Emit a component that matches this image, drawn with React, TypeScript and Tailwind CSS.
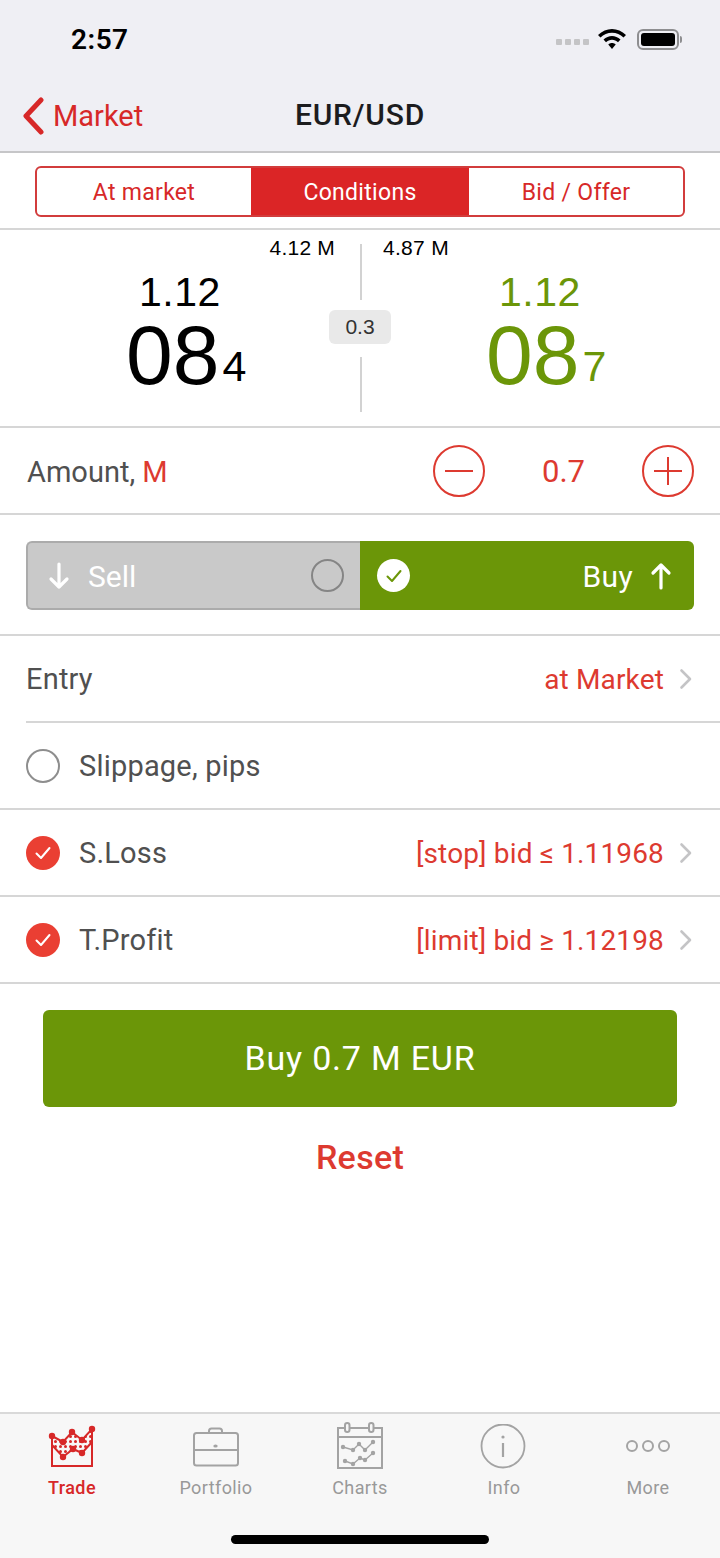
const label = "font-['Roboto',sans-serif]";
const price = "font-['Liberation_Sans',sans-serif]";

function Check({ color }: { color: string }) {
  return (
    <svg width="20" height="20" viewBox="0 0 20 20" fill="none">
      <path d="M3.5 10.5 L8 15 L16.5 5" stroke={color} strokeWidth="2" strokeLinecap="round" strokeLinejoin="round" />
    </svg>
  );
}

function TabIcon({ name }: { name: string }) {
  if (name === 'Trade') {
    return (
      <svg width="48" height="48" viewBox="0 0 48 48" fill="none" className="overflow-visible">
        <defs>
          <pattern id="dots" width="5" height="5" patternUnits="userSpaceOnUse">
            <circle cx="2.5" cy="2.5" r="1.5" fill="#d72828" />
          </pattern>
        </defs>
        <path d="M4 12 L15 18 L24 8 L34 16 L44 5 V18 L34 29 L25 25 L15 33 L4 21 Z" fill="url(#dots)" />
        <path d="M4 12 L15 18 L24 8 L34 16 L44 5 V42 H4 Z" stroke="#d72828" strokeWidth="2" />
        <path d="M4 21 L15 33 L25 25 L34 29 L44 18" stroke="#d72828" strokeWidth="2" />
        {[[4, 12], [15, 18], [24, 8], [34, 16], [44, 5], [15, 33], [25, 25], [34, 29]].map(([x, y]) => (
          <circle key={`${x}-${y}`} cx={x} cy={y} r="3.2" fill="#d72828" />
        ))}
      </svg>
    );
  }
  if (name === 'Portfolio') {
    return (
      <svg width="48" height="48" viewBox="0 0 48 48" fill="none" stroke="#a3a3a3" strokeWidth="2">
        <rect x="2" y="9" width="44" height="32.5" rx="2.5" />
        <path d="M2 26 H46" />
        <path d="M17 9 V7 Q17 4.5 19.5 4.5 H27.5 Q30 4.5 30 7 V9" />
        <ellipse cx="23.5" cy="22" rx="2.2" ry="1.6" fill="#a3a3a3" stroke="none" />
      </svg>
    );
  }
  if (name === 'Charts') {
    return (
      <svg width="48" height="48" viewBox="0 0 48 48" fill="none" stroke="#a3a3a3" strokeWidth="2" className="overflow-visible">
        <rect x="2" y="4" width="44" height="40" />
        <path d="M2 13 H46" />
        <rect x="9" y="-1" width="4.5" height="9" rx="2.2" fill="#f7f7f7" />
        <rect x="33" y="-1" width="4.5" height="9" rx="2.2" fill="#f7f7f7" />
        <path d="M7 23 L17 26 L23 20 L29 26 L37 18" strokeWidth="1.4" />
        <path d="M9 37 L17 40 L24 34 L29 36 L37 29" strokeWidth="1.4" />
        {[[7, 23], [17, 26], [23, 20], [29, 26], [37, 18], [9, 37], [17, 40], [24, 34], [29, 36], [37, 29]].map(([x, y]) => (
          <circle key={`${x}-${y}`} cx={x} cy={y} r="2.2" fill="#a3a3a3" stroke="none" />
        ))}
      </svg>
    );
  }
  if (name === 'Info') {
    return (
      <svg width="48" height="48" viewBox="0 0 48 48" fill="none" stroke="#a3a3a3" strokeWidth="1.8">
        <circle cx="23" cy="22" r="21.5" />
        <path d="M23 19 V33" strokeWidth="2.2" />
        <circle cx="23" cy="13" r="1.6" fill="#a3a3a3" stroke="none" />
      </svg>
    );
  }
  return (
    <svg width="48" height="48" viewBox="0 0 48 48" fill="none" stroke="#a3a3a3" strokeWidth="2">
      <circle cx="8" cy="22" r="5" />
      <circle cx="24" cy="22" r="5" />
      <circle cx="40" cy="22" r="5" />
    </svg>
  );
}

function RowInner({ title, value, mark }: { title: string; value?: string; mark?: 'on' | 'off' }) {
  return (
    <div className="h-full flex items-center pr-[26px]">
      {mark === 'on' && (
        <div className="w-[34px] h-[34px] rounded-full bg-[#ea3f33] flex items-center justify-center mr-[19px]">
          <Check color="#ffffff" />
        </div>
      )}
      {mark === 'off' && <div className="w-[34px] h-[34px] rounded-full border-2 border-[#8e8e8e] mr-[19px]" />}
      <span className="mt-[3px] text-[29px] tracking-[0.2px] text-[#505050]">{title}</span>
      {value && <span className="mt-[3px] ml-auto text-[28px] tracking-[0.15px] text-[#dd3a30]">{value}</span>}
      {value && (
        <svg className="ml-[15px] mr-[1px]" width="14" height="22" viewBox="0 0 14 22" fill="none">
          <path d="M2.5 2.5 L11 11 L2.5 19.5" stroke="#c4c4c6" strokeWidth="2.6" strokeLinecap="round" strokeLinejoin="round" />
        </svg>
      )}
    </div>
  );
}

export default function App() {
  return (
    <div className={`${label} w-[720px] h-[1558px] bg-white flex flex-col overflow-hidden`}>
      {/* status + nav */}
      <div className="h-[153px] bg-[#efeff4] border-b-2 border-[#c6c6c8] shrink-0">
        <div className="h-[78px] flex items-center pl-[71px] pr-[38px]">
          <span className="mt-[2px] text-[28px] font-semibold text-black tracking-[0.5px]">2:57</span>
          <div className="ml-auto flex items-center">
            <div className="flex gap-[3px] mt-[6px]">
              {[0, 1, 2, 3].map((i) => (
                <div key={i} className="w-[6px] h-[6px] rounded-[1px] bg-[#c4c4c6]" />
              ))}
            </div>
            <svg className="ml-[9px]" width="28" height="20" viewBox="0 0 28 20" fill="#000">
              <path d="M14 0 C19 0 24 2 28 6 L25.5 8.6 C22.4 5.6 18.4 3.8 14 3.8 C9.6 3.8 5.6 5.6 2.5 8.6 L0 6 C4 2 9 0 14 0 Z" />
              <path d="M14 7 C17 7 20 8.2 22.5 10.6 L20 13.2 C18.4 11.7 16.3 10.8 14 10.8 C11.7 10.8 9.6 11.7 8 13.2 L5.5 10.6 C8 8.2 11 7 14 7 Z" />
              <path d="M14 14 C15.4 14 16.7 14.5 17.7 15.5 L14 20 L10.3 15.5 C11.3 14.5 12.6 14 14 14 Z" />
            </svg>
            <div className="ml-[11px] flex items-center">
              <div className="w-[42px] h-[21px] rounded-[6px] border-2 border-[#8e8e90] p-[2px]">
                <div className="w-full h-full rounded-[3px] bg-black" />
              </div>
              <div className="w-[2px] h-[7px] bg-[#8e8e90] rounded-r-[2px] ml-[1px]" />
            </div>
          </div>
        </div>
        <div className="relative h-[74px] flex items-center justify-center">
          <div className="absolute left-[20px] top-[15px] flex items-center text-[#d72828]">
            <svg width="26" height="38" viewBox="0 0 26 38" fill="none">
              <path d="M21 3 L6 19 L21 35" stroke="#d72828" strokeWidth="5" strokeLinecap="round" strokeLinejoin="round" />
            </svg>
            <span className="mt-[2px] text-[29px] ml-[7px]">Market</span>
          </div>
          <span className="mt-[-2px] text-[30px] font-medium text-[#1c1c1e] tracking-[0.8px]">EUR/USD</span>
        </div>
      </div>

      {/* order type tabs */}
      <div className="h-[77px] border-b-2 border-[#d6d6d6] shrink-0 flex items-center justify-center pt-[2px]">
        <div className="w-[650px] h-[51px] border-2 border-[#d23c3c] rounded-[6px] flex overflow-hidden text-[23px] tracking-[0.3px]">
          <div className="w-[214px] pt-[3px] flex items-center justify-center text-[#d72828]">At market</div>
          <div className="w-[218px] pt-[3px] flex items-center justify-center bg-[#db2526] text-white">Conditions</div>
          <div className="flex-1 pt-[3px] flex items-center justify-center text-[#d72828]">Bid / Offer</div>
        </div>
      </div>

      {/* quotes */}
      <div className={`${price} relative h-[198px] border-b-2 border-[#d6d6d6] shrink-0 flex`}>
        <div className="w-[360px]">
          <div className="h-[36px] flex items-end justify-end pr-[25px] text-[21px] tracking-[0.2px] leading-none text-black pb-[8px]">4.12 M</div>
          <div className="pl-[139px] pt-[4px] text-[41px] leading-[44px] text-black tracking-[0.5px]">1.12</div>
          <div className="pl-[126px] flex items-end h-[76px]">
            <span className="text-[84px] leading-[70px] text-black">08</span>
            <span className="text-[43px] leading-[44px] text-black ml-[3px] mb-[2px]">4</span>
          </div>
        </div>
        <div className="flex-1">
          <div className="h-[36px] flex items-end pl-[23px] text-[21px] tracking-[0.3px] leading-none text-black pb-[8px]">4.87 M</div>
          <div className="pl-[139px] pt-[4px] text-[41px] leading-[44px] text-[#6b9608] tracking-[0.5px]">1.12</div>
          <div className="pl-[126px] flex items-end h-[76px]">
            <span className="text-[84px] leading-[70px] text-[#6b9608]">08</span>
            <span className="text-[43px] leading-[44px] text-[#6b9608] ml-[3px] mb-[2px]">7</span>
          </div>
        </div>
        <div className="absolute left-[360px] top-[14px] w-[2px] h-[56px] bg-[#d2d2d2]" />
        <div className="absolute left-[360px] top-[127px] w-[2px] h-[55px] bg-[#d2d2d2]" />
        <div className="absolute left-[329px] top-[80px] w-[62px] h-[34px] rounded-[6px] bg-[#e9e9e9] flex items-center justify-center text-[21px] text-[#333]">0.3</div>
      </div>

      {/* amount */}
      <div className="h-[87px] border-b-2 border-[#d6d6d6] shrink-0 flex items-center pl-[27px] pr-[26px]">
        <span className="mt-[4px] text-[29px] text-[#505050]">
          Amount, <span className="text-[#dd3a30]">M</span>
        </span>
        <div className="ml-auto flex items-center">
          <svg width="52" height="52" viewBox="0 0 52 52" fill="none" stroke="#dd3a30" strokeWidth="2">
            <circle cx="26" cy="26" r="25" />
            <path d="M12 26 H40" />
          </svg>
          <span className="mt-[4px] w-[157px] text-center text-[31px] text-[#dd3a30]">0.7</span>
          <svg width="52" height="52" viewBox="0 0 52 52" fill="none" stroke="#dd3a30" strokeWidth="2">
            <circle cx="26" cy="26" r="25" />
            <path d="M12 26 H40 M26 12 V40" />
          </svg>
        </div>
      </div>

      {/* side toggle */}
      <div className="h-[121px] border-b-2 border-[#d6d6d6] shrink-0 flex items-center px-[26px] pt-[2px]">
        <div className="w-full h-[69px] flex text-[30px] text-white">
          <div className="w-[334px] bg-[#c9c9c9] border-2 border-r-0 border-[#ababab] rounded-l-[6px] flex items-center pl-[20px] pr-[16px]">
            <svg width="22" height="28" viewBox="0 0 22 28" fill="none" stroke="#fff" strokeWidth="3.2" strokeLinecap="round" strokeLinejoin="round">
              <path d="M11 2 V25 M3 17 L11 25 L19 17" />
            </svg>
            <span className="mt-[1px] ml-[18px]">Sell</span>
            <div className="ml-auto w-[33px] h-[33px] rounded-full border-2 border-[#858585]" />
          </div>
          <div className="flex-1 bg-[#6b9608] rounded-r-[6px] flex items-center pl-[17px] pr-[22px]">
            <div className="w-[33px] h-[33px] rounded-full bg-white flex items-center justify-center">
              <Check color="#6b9608" />
            </div>
            <span className="mt-[1px] ml-auto tracking-[0.4px]">Buy</span>
            <svg className="ml-[17px]" width="22" height="28" viewBox="0 0 22 28" fill="none" stroke="#fff" strokeWidth="3.2" strokeLinecap="round" strokeLinejoin="round">
              <path d="M11 26 V3 M3 11 L11 3 L19 11" />
            </svg>
          </div>
        </div>
      </div>

      {/* order rows */}
      <div className="shrink-0 border-b-2 border-[#d6d6d6]">
        <div className="h-[87px] ml-[26px] border-b-2 border-[#d6d6d6]">
          <RowInner title="Entry" value="at Market" />
        </div>
        <div className="h-[87px] border-b-2 border-[#d6d6d6] pl-[26px]">
          <RowInner title="Slippage, pips" mark="off" />
        </div>
        <div className="h-[87px] border-b-2 border-[#d6d6d6] pl-[26px]">
          <RowInner title="S.Loss" value="[stop] bid ≤ 1.11968" mark="on" />
        </div>
        <div className="h-[85px] pl-[26px]">
          <RowInner title="T.Profit" value="[limit] bid ≥ 1.12198" mark="on" />
        </div>
      </div>

      {/* submit */}
      <div className="flex-1 flex flex-col items-center pt-[26px]">
        <button className="w-[634px] h-[97px] rounded-[6px] bg-[#6b9608] text-white text-[34px] tracking-[0.8px]">Buy 0.7 M EUR</button>
        <span className="mt-[25px] text-[34px] font-medium text-[#dd3a30] tracking-[0.3px]">Reset</span>
      </div>

      {/* tab bar */}
      <div className="h-[146px] bg-[#f7f7f7] border-t-2 border-[#d9d9d9] shrink-0 flex flex-col">
        <div className="flex pt-[10px]">
          {['Trade', 'Portfolio', 'Charts', 'Info', 'More'].map((name) => (
            <div key={name} className="w-[144px] flex flex-col items-center">
              <TabIcon name={name} />
              <span className={`mt-[2px] text-[18px] tracking-[0.4px] ${name === 'Trade' ? 'text-[#d72828] font-medium' : 'text-[#999999]'}`}>{name}</span>
            </div>
          ))}
        </div>
        <div className="mt-auto mb-[14px] mx-auto w-[258px] h-[9px] rounded-full bg-black" />
      </div>
    </div>
  );
}
